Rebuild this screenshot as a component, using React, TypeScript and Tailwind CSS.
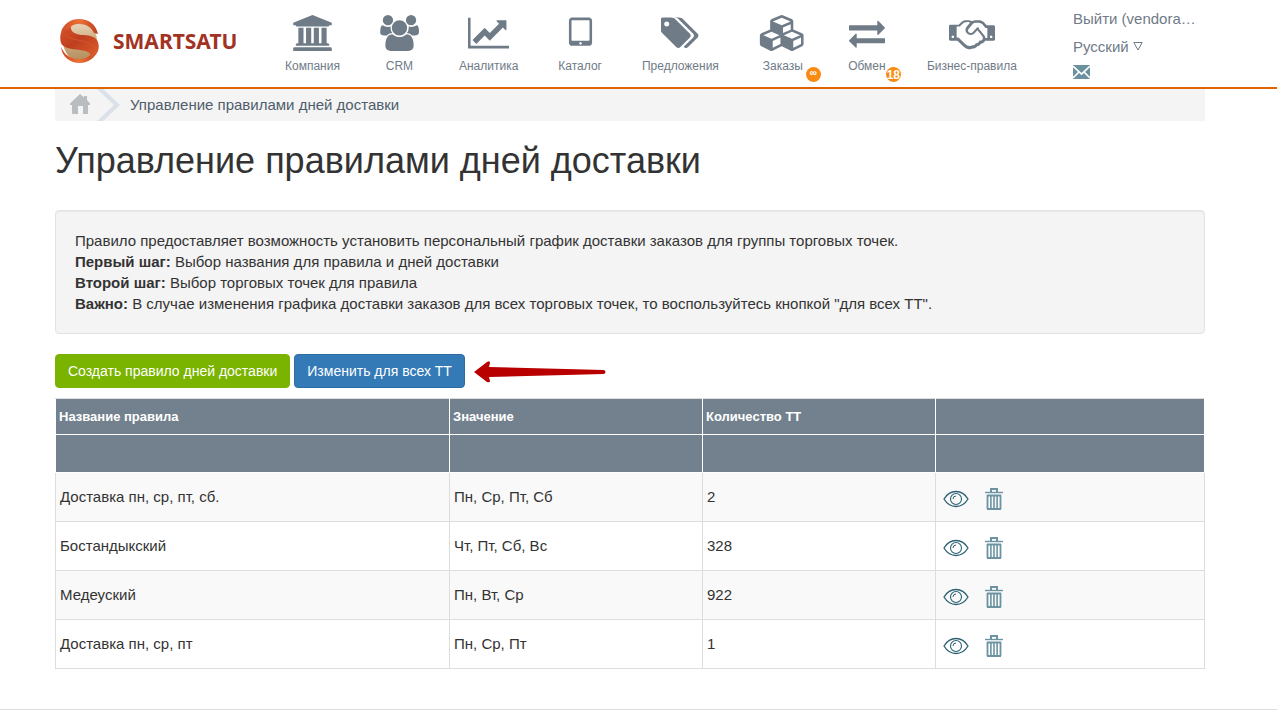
import type { ReactNode } from "react"

type NavItem = {
  label: string
  viewBox: string
  width: string
  path: string
  badge?: string
  badgeClass?: string
}

const NAV_ITEMS: NavItem[] = [
  {
    label: "Компания",
    viewBox: "0 0 1920 1792",
    width: "w-[39px]",
    path: "M960 0l960 384v128h-128q0 26-20.5 45t-48.5 19h-1526q-28 0-48.5-19t-20.5-45h-128v-128zM256 640h256v768h128v-768h256v768h128v-768h256v768h128v-768h256v768h59q28 0 48.5 19t20.5 45v64h-1664v-64q0-26 20.5-45t48.5-19h59v-768zM1851 1600q28 0 48.5 19t20.5 45v128h-1920v-128q0-26 20.5-45t48.5-19h1782z",
  },
  {
    label: "CRM",
    viewBox: "0 0 1920 1792",
    width: "w-[39px]",
    path: "M593 896q-162 5-265 128h-134q-82 0-138-40.5t-56-118.5q0-353 124-353 6 0 43.5 21t97.5 42.5 119 21.5q67 0 133-23-5 37-5 66 0 159 93 256zM1664 1533q0 120-73 189.5t-194 69.5h-874q-121 0-194-69.5t-73-189.5q0-53 3.5-103.5t14-109 26.5-108.5 43-97.5 62-81 85.5-53.5 111.5-20q10 0 43 21.5t73 48 107 48 135 21.5 135-21.5 107-48 73-48 43-21.5q61 0 111.5 20t85.5 53.5 62 81 43 97.5 26.5 108.5 14 109 3.5 103.5zM640 256q0 106-75 181t-181 75-181-75-75-181 75-181 181-75 181 75 75 181zM1344 640q0 159-112.5 271.5t-271.5 112.5-271.5-112.5-112.5-271.5 112.5-271.5 271.5-112.5 271.5 112.5 112.5 271.5zM1920 865q0 78-56 118.5t-138 40.5h-134q-103-123-265-128 93-97 93-256 0-29-5-66 66 23 133 23 59 0 119-21.5t97.5-42.5 43.5-21q124 0 124 353zM1792 256q0 106-75 181t-181 75-181-75-75-181 75-181 181-75 181 75 75 181z",
  },
  {
    label: "Аналитика",
    viewBox: "0 0 2048 1792",
    width: "w-[41px]",
    path: "M2048 1536v128h-2048v-1536h128v1408h1920zM1920 288v435q0 21-19.5 29.5t-35.5-7.5l-121-121-633 633q-10 10-23 10t-23-10l-233-233-416 416-192-192 585-585q10-10 23-10t23 10l233 233 464-464-121-121q-16-16-7.5-35.5t29.5-19.5h435q14 0 23 9t9 23z",
  },
  {
    label: "Каталог",
    viewBox: "0 0 1536 1792",
    width: "w-[31px]",
    path: "M832 1408q0-26-19-45t-45-19-45 19-19 45 19 45 45 19 45-19 19-45zM1216 1248v-960q0-13-9.5-22.5t-22.5-9.5h-832q-13 0-22.5 9.5t-9.5 22.5v960q0 13 9.5 22.5t22.5 9.5h832q13 0 22.5-9.5t9.5-22.5zM1344 288v1088q0 66-47 113t-113 47h-832q-66 0-113-47t-47-113v-1088q0-66 47-113t113-47h832q66 0 113 47t47 113z",
  },
  {
    label: "Предложения",
    viewBox: "0 0 1835 1792",
    width: "w-[38px]",
    path: "M384 448q0-53-37.5-90.5t-90.5-37.5-90.5 37.5-37.5 90.5 37.5 90.5 90.5 37.5 90.5-37.5 37.5-90.5zM1451 1024q0 53-37 90l-491 492q-39 37-91 37-53 0-90-37l-715-716q-38-37-64.5-101t-26.5-117v-416q0-52 38-90t90-38h416q53 0 117 26.5t102 64.5l715 714q37 39 37 91zM1835 1024q0 53-37 90l-491 492q-39 37-91 37-36 0-59-14t-53-45l470-470q37-37 37-90 0-52-37-91l-715-714q-38-38-102-64.5t-117-26.5h224q53 0 117 26.5t102 64.5l715 714q37 39 37 91z",
  },
  {
    label: "Заказы",
    viewBox: "0 0 2304 1792",
    width: "w-12",
    path: "M640 1632l384-192v-314l-384 164v342zM576 1178l404-173-404-173-404 173zM1664 1632l384-192v-314l-384 164v342zM1600 1178l404-173-404-173-404 173zM1152 893l384-165v-266l-384 164v267zM1088 514l441-189-441-189-441 189zM2176 1024v416q0 36-19 67t-52 47l-448 224q-25 14-57 14t-57-14l-448-224q-5-2-7-4-2 2-7 4l-448 224q-25 14-57 14t-57-14l-448-224q-33-16-52-47t-19-67v-416q0-38 21.5-70t56.5-48l434-186v-400q0-38 21.5-70t56.5-48l448-192q23-10 50-10t50 10l448 192q35 16 56.5 48t21.5 70v400l434 186q36 16 57 48t21 70z",
    badge: "∞",
    badgeClass: "-right-3.5 pb-1 text-[10px]",
  },
  {
    label: "Обмен",
    viewBox: "0 0 1792 1792",
    width: "w-10",
    path: "M1792 1184v192q0 13-9.5 22.5t-22.5 9.5h-1376v192q0 13-9.5 22.5t-22.5 9.5q-12 0-24-10l-319-320q-9-9-9-22 0-14 9-23l320-320q9-9 23-9 13 0 22.5 9.5t9.5 22.5v192h1376q13 0 22.5 9.5t9.5 22.5zM1792 640q0 14-9 23l-320 320q-9 9-23 9-13 0-22.5-9.5t-9.5-22.5v-192h-1376q-13 0-22.5-9.5t-9.5-22.5v-192q0-13 9.5-22.5t22.5-9.5h1376v-192q0-14 9-23t23-9q12 0 24 10l319 319q9 9 9 23z",
    badge: "18",
    badgeClass: "-right-3.5 text-xs",
  },
  {
    label: "Бизнес-правила",
    viewBox: "0 0 2304 1792",
    width: "w-[46px]",
    path: "M192 1152q40 0 56-32t0-64-56-32-56 32 0 64 56 32zM1665 1062q-10-13-38.5-50t-41.5-54-38-49-42.5-53-40.5-47-45-49l-125 140q-83 94-208.5 92t-205.5-98q-57-69-56.5-158t58.5-157l177-206q-22-11-51-16.5t-47.5-6-56.5.5-49 1q-92 0-158 66l-158 158h-155v544q5 0 21-.5t22 0 19.5 2 20.5 4.5 17.5 8.5 18.5 13.5l297 292q115 111 227 111 78 0 125-47 57 20 112.5-8t72.5-85q74 6 127-44 20-18 36-45.5t14-50.5q10 10 43 10 43 0 77-21t49.5-53 12-71.5-30.5-73.5zM1824 1152h96v-512h-93l-157-180q-66-76-169-76h-167q-89 0-146 67l-209 243q-28 33-28 75t27 75q43 51 110 52t111-49l193-218q25-23 53.5-21.5t47 27 8.5 56.5q16 19 56 63t60 68q29 36 82.5 105.5t64.5 84.5q52 66 60 140zM2112 1152q40 0 56-32t0-64-56-32-56 32 0 64 56 32zM2304 576v640q0 26-19 45t-45 19h-434q-27 65-82 106.5t-125 51.5q-33 48-80.5 81.5t-102.5 45.5q-42 53-104.5 81.5t-128.5 24.5q-60 34-126 39.5t-127.5-14-117-53.5-103.5-81l-287-282h-358q-26 0-45-19t-19-45v-672q0-26 19-45t45-19h421q14-14 47-48t47.5-48 44-40 50.5-37.5 51-25.5 62-19.5 68-5.5h117q99 0 181 56 82-56 181-56h167q35 0 67 6t56.5 14.5 51.5 26.5 44.5 31 43 39.5 39 41 41 45 41.5 48.5h355q26 0 45 19t19 45z",
  },
]

const RULES = [
  { name: "Доставка пн, ср, пт, сб.", days: "Пн, Ср, Пт, Сб", count: 2 },
  { name: "Бостандыкский", days: "Чт, Пт, Сб, Вс", count: 328 },
  { name: "Медеуский", days: "Пн, Вт, Ср", count: 922 },
  { name: "Доставка пн, ср, пт", days: "Пн, Ср, Пт", count: 1 },
]

const COLUMNS = ["Название правила", "Значение", "Количество ТТ", ""]

function Logo() {
  return (
    <a href="#" className="flex w-[180px] items-center gap-[13px]">
      <svg viewBox="0 0 40 44" className="h-11 w-10 shrink-0" aria-hidden="true">
        <defs>
          <linearGradient id="core" x1="0.4" y1="0" x2="0.5" y2="1">
            <stop offset="0" stopColor="#ecdcc6" />
            <stop offset="0.5" stopColor="#cfab7e" />
            <stop offset="1" stopColor="#b28d5e" />
          </linearGradient>
          <linearGradient id="ribbon" x1="0" y1="0" x2="1" y2="1">
            <stop offset="0" stopColor="#d9522a" />
            <stop offset="0.45" stopColor="#bd3f20" />
            <stop offset="1" stopColor="#e0602b" />
          </linearGradient>
          <linearGradient id="rim" x1="0" y1="0" x2="1" y2="0">
            <stop offset="0" stopColor="#cf4a24" />
            <stop offset="0.5" stopColor="#ec7138" />
            <stop offset="1" stopColor="#bd3f20" />
          </linearGradient>
        </defs>
        <ellipse cx="20" cy="22" rx="17" ry="20" fill="url(#core)" />
        <path d="M1 28C4 33 6 39 19 40C26 40 30 37 33 33L38 31C35 39 28 44 20 44C10 44 2 38 1 28Z" fill="url(#rim)" />
        <path
          d="M11 7C10 12 14 15 21 16C28 16 34 17 37 21C41 28 38 36 31 39C31 33 27 32 20 31C11 30 3 29 1 24C-1 17 1 11 5 8Z"
          fill="url(#ribbon)"
        />
        <path d="M1 13C4 4 11 0 19 0C28 0 36 5 38 15L34 14C31 8 26 5 19 5C14 5 11 7 10 9Z" fill="url(#rim)" />
        <path d="M5 15C11 24 27 18 36 30" fill="none" stroke="#d9582c" strokeWidth="0.800" />
      </svg>
      <span className="font-['Noto_Sans',sans-serif] text-[21px] leading-7 font-bold text-[#a23324]">
        SMARTSATU
      </span>
    </a>
  )
}

function MainNav() {
  return (
    <nav className="flex gap-10 pt-[15px] text-xs text-[#6f7b87]">
      {NAV_ITEMS.map((item) => (
        <a key={item.label} href="#" className="relative flex h-[67px] flex-col items-center">
          <svg viewBox={item.viewBox} className={`h-9 ${item.width}`} fill="currentColor" aria-hidden="true">
            <path d={item.path} />
          </svg>
          <span className="mt-[7px] leading-4 whitespace-nowrap">{item.label}</span>
          {item.badge && (
            <span
              className={`absolute bottom-0 flex size-[15px] items-center justify-center rounded-full bg-[#f98b12] leading-none font-bold text-white ${item.badgeClass}`}
            >
              {item.badge}
            </span>
          )}
        </a>
      ))}
    </nav>
  )
}

function UserMenu() {
  return (
    <div className="flex w-[132px] flex-col pt-2 text-[#6f7b87]">
      <a href="#" className="w-[124px] truncate leading-[22px]">
        Выйти (vendora…
      </a>
      <button type="button" className="mt-1.5 flex items-center gap-1 leading-[22px]">
        Русский
        <svg viewBox="0 0 10 9" className="mb-0.5 h-[9px] w-2.5" aria-hidden="true">
          <path d="M0.800 0.500H9.200L5 8Z" fill="none" stroke="currentColor" />
        </svg>
      </button>
      <a href="#" aria-label="Сообщения" className="mt-[7px]">
        <svg viewBox="0 0 17 14" className="h-3.5 w-[17px]" aria-hidden="true">
          <path d="M0 0H17V14H0Z" fill="#6c919e" />
          <path d="M0 1L8.500 9L17 1M0 13L6 7M17 13L11 7" fill="none" stroke="#fff" strokeWidth="1.700" />
        </svg>
      </a>
    </div>
  )
}

function Breadcrumbs() {
  return (
    <div className="flex h-8 items-center bg-[#f4f4f4] pl-[15px]">
      <a href="#" aria-label="Главная">
        <svg viewBox="0 0 20 20" className="mb-0.5 size-5" aria-hidden="true">
          <path
            d="M10 0L14 3.500V2H17V6L20 9.500V11H18V19Q18 20 17 20H13V12H8V20H3Q2 20 2 19V11H0V9.500Z"
            fill="#b7bdc0"
          />
        </svg>
      </a>
      <svg viewBox="0 0 24 32" className="ml-[7px] h-8 w-6" aria-hidden="true">
        <path d="M0 0H6L23 16L6 32H0L17 16Z" fill="#dbe1e8" />
      </svg>
      <span className="ml-[9px] pb-0.5 text-[#4f5d6b]">Управление правилами дней доставки</span>
    </div>
  )
}

function IconButton({ label, children }: { label: string; children: ReactNode }) {
  return (
    <button type="button" aria-label={label} className="block cursor-pointer">
      {children}
    </button>
  )
}

function EyeIcon() {
  return (
    <svg viewBox="0 0 26 18" className="h-[18px] w-[26px]" fill="none" stroke="#2b6072" aria-hidden="true">
      <path d="M1 9C7 -1 19 -1 25 9C19 19 7 19 1 9Z" strokeWidth="1.300" />
      <circle cx="13" cy="9" r="5.500" strokeWidth="1.100" />
      <path d="M10 9Q10 6 13 6" />
    </svg>
  )
}

function TrashIcon() {
  return (
    <svg viewBox="0 0 18 22" className="h-[22px] w-[18px]" fill="none" stroke="#6c93a2" aria-hidden="true">
      <path d="M6 4V1H12V4" strokeWidth="2" />
      <path d="M0 4.500H18" strokeWidth="1.400" />
      <path d="M2 7.500H16M2 21H16" strokeWidth="2" />
      <path d="M2.500 7V21M15.500 7V21" strokeWidth="1.800" />
      <path d="M5.900 7V21M9 7V21M12.100 7V21" strokeWidth="1.600" />
    </svg>
  )
}

function RulesTable() {
  return (
    <table className="mt-2.5 w-full table-fixed border-collapse border border-[#ddd] text-left">
      <colgroup>
        <col className="w-[394px]" />
        <col className="w-[253px]" />
        <col className="w-[233px]" />
        <col />
      </colgroup>
      <thead className="bg-[#73818e] text-white">
        <tr className="h-9">
          {COLUMNS.map((column, index) => (
            <th key={index} className="border border-white border-t-[#ddd] px-[3px] text-[13px] leading-5 font-bold">
              {column}
            </th>
          ))}
        </tr>
        <tr className="h-[38px]">
          {COLUMNS.map((_, index) => (
            <td key={index} className="border border-white" />
          ))}
        </tr>
      </thead>
      <tbody>
        {RULES.map((rule) => (
          <tr key={rule.name} className="h-[49px] odd:bg-[#f9f9f9]">
            <td className="border border-[#ddd] px-1 pb-0.5">{rule.name}</td>
            <td className="border border-[#ddd] px-1 pb-0.5">{rule.days}</td>
            <td className="border border-[#ddd] px-1 pb-0.5">{rule.count}</td>
            <td className="border border-[#ddd] px-[7px]">
              <div className="flex items-center gap-4 pt-1">
                <IconButton label="Просмотреть">
                  <EyeIcon />
                </IconButton>
                <IconButton label="Удалить">
                  <TrashIcon />
                </IconButton>
              </div>
            </td>
          </tr>
        ))}
      </tbody>
    </table>
  )
}

export default function App() {
  return (
    <div className="bg-white font-['Liberation_Sans',Arial,sans-serif] text-[15px] leading-[21px] text-[#333]">
      <header className="border-b-2 border-[#e06500] pr-[17px]">
        <div className="mx-auto flex h-[87px] max-w-[1150px] justify-between pl-[5px]">
          <div className="flex gap-[45px]">
            <div className="flex pb-[5px]">
              <Logo />
            </div>
            <MainNav />
          </div>
          <UserMenu />
        </div>
      </header>

      <div className="border-b border-[#ddd] pr-[17px] pb-10">
        <main className="mx-auto max-w-[1150px]">
          <Breadcrumbs />
          <h1 className="mt-5 text-4xl leading-10 text-[#333]">Управление правилами дней доставки</h1>

          <section className="mt-[29px] rounded border border-[#e3e3e3] bg-[#f4f4f4] p-[19px] shadow-[inset_0_1px_1px_rgba(0,0,0,0.05)]">
            <p>Правило предоставляет возможность установить персональный график доставки заказов для группы торговых точек.</p>
            <p>
              <b>Первый шаг:</b> Выбор названия для правила и дней доставки
            </p>
            <p>
              <b>Второй шаг:</b> Выбор торговых точек для правила
            </p>
            <p>
              <b>Важно:</b> В случае изменения графика доставки заказов для всех торговых точек, то воспользуйтесь кнопкой "для всех ТТ".
            </p>
          </section>

          <div className="mt-5 flex items-center gap-1 text-sm text-white">
            <button type="button" className="h-[34px] rounded border border-[#7ab300] bg-[#7ab300] px-3">
              Создать правило дней доставки
            </button>
            <button type="button" className="h-[34px] rounded border border-[#2e6da4] bg-[#337ab7] px-3">
              Изменить для всех ТТ
            </button>
            <svg viewBox="0 0 134 24" className="ml-1 h-6 w-[134px]" aria-hidden="true">
              <path
                d="M1 13L14 3Q17 1 17 4L16 8L131 11Q134 13 131 15L16 18L17 22Q17 24 14 23Z"
                fill="#b80000"
              />
            </svg>
          </div>

          <RulesTable />
        </main>
      </div>
    </div>
  )
}
